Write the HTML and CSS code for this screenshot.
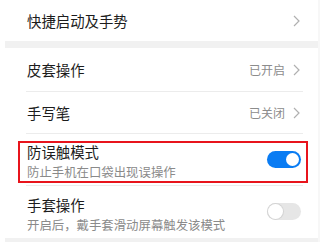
FILE: index.html
```html
<!DOCTYPE html>
<html lang="zh">
<head>
<meta charset="utf-8">
<link rel="stylesheet" href="styles.css">
</head>
<body>
<div class="page">
  <div class="row row-top">
    <span class="title">快捷启动及手势</span>
    <svg class="chev" width="7" height="12" viewBox="0 0 7 12"><path d="M1 1 L6 6 L1 11" fill="none" stroke="#b0b0b0" stroke-width="1.2"/></svg>
  </div>
  <div class="gap"></div>
  <div class="row row-a">
    <span class="title">皮套操作</span>
    <span class="value">已开启</span>
    <svg class="chev" width="7" height="12" viewBox="0 0 7 12"><path d="M1 1 L6 6 L1 11" fill="none" stroke="#b0b0b0" stroke-width="1.2"/></svg>
  </div>
  <div class="divider"></div>
  <div class="row row-b">
    <span class="title">手写笔</span>
    <span class="value">已关闭</span>
    <svg class="chev" width="7" height="12" viewBox="0 0 7 12"><path d="M1 1 L6 6 L1 11" fill="none" stroke="#b0b0b0" stroke-width="1.2"/></svg>
  </div>
  <div class="divider"></div>
  <div class="row row-two row-hl">
    <div class="texts">
      <div class="title">防误触模式</div>
      <div class="sub">防止手机在口袋出现误操作</div>
    </div>
    <div class="switch on"><span class="knob"></span></div>
    <div class="mark"></div>
  </div>
  <div class="divider"></div>
  <div class="row row-two row-last">
    <div class="texts">
      <div class="title">手套操作</div>
      <div class="sub">开启后，戴手套滑动屏幕触发该模式</div>
    </div>
    <div class="switch off"><span class="knob"></span></div>
  </div>
  <div class="gap gap-bottom"></div>
</div>
</body>
</html>
```

FILE: styles.css
```css
html, body {
  margin: 0;
  padding: 0;
  background: #ffffff;
}
body {
  width: 320px;
  height: 242px;
  overflow: hidden;
  font-family: "Noto Sans CJK SC", "Noto Sans", sans-serif;
}
.page {
  padding-left: 5px;
  border-right: 2px solid #f7f7f7;
}
.row {
  display: flex;
  align-items: center;
  padding: 0 18px 0 22px;
  position: relative;
}
.row-top { height: 41px; }
.row-a { height: 43px; }
.row-b { height: 41px; }
.title {
  font-size: 14.4px;
  line-height: 20px;
  color: #1c1c1c;
  flex: 1;
}
.value {
  font-size: 12px;
  color: #8c8c8c;
  margin-right: 8px;
}
.chev { display: block; }
.gap {
  height: 7px;
  background: #f1f1f1;
}
.gap-bottom { height: 4px; }
.divider {
  height: 1px;
  background: #ececec;
  margin: 0 15px 0 21px;
}
.row-two {
  align-items: flex-start;
  padding-right: 17px;
}
.row-hl { height: 51px; padding-top: 8px; box-sizing: border-box; }
.row-last { height: 52px; padding-top: 9px; box-sizing: border-box; }
.texts { flex: 1; }
.texts .title { display: block; }
.sub {
  font-size: 12.4px;
  line-height: 20px;
  color: #8a8a8a;
}
.switch {
  width: 34px;
  height: 17px;
  border-radius: 9px;
  position: relative;
  box-sizing: border-box;
}
.row-hl .switch { margin-top: 9px; }
.row-last .switch { margin-top: 8px; }
.switch.on { background: #0a7cf3; }
.switch.off { background: #e6e6e6; }
.knob {
  position: absolute;
  top: 2px;
  width: 13px;
  height: 13px;
  border-radius: 50%;
  background: #ffffff;
}
.on .knob { right: 2px; }
.off .knob {
  left: 1px;
  top: 1px;
  width: 15px;
  height: 15px;
  box-shadow: 0 0 0 1px #d4d4d4;
}
.mark {
  position: absolute;
  left: 13px;
  top: 7px;
  width: 290px;
  height: 42px;
  border: 2px solid #e8141c;
  box-sizing: border-box;
}
```
